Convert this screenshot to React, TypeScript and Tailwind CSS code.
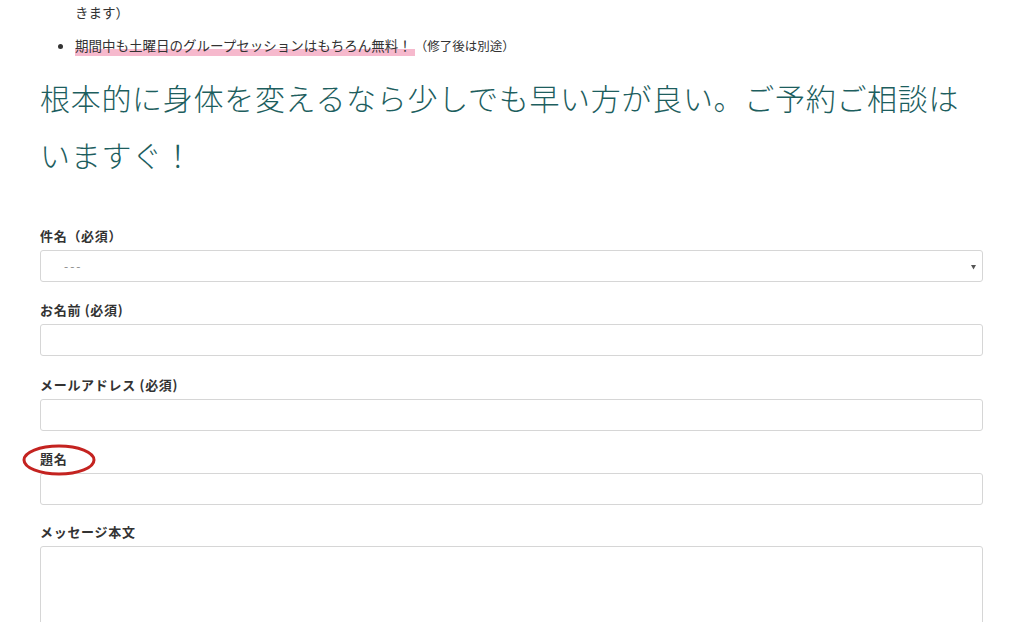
import React from "react";

const font = { fontFamily: '"Noto Sans CJK JP", "Noto Sans", sans-serif' };

function Label({ children }: { children: React.ReactNode }) {
  return (
    <div className="text-[13px] leading-[18px] font-bold text-[#333] tracking-[0.7px] mb-[5px]">{children}</div>
  );
}

export default function App() {
  return (
    <div className="w-[1024px] h-[622px] overflow-hidden bg-white text-[#333]" style={font}>
      <div className="pl-[40px] pr-[41px]">
        <ul className="pl-[35px] text-[13.5px] text-[#333]">
          <li className="list-none leading-[24px]">きます）</li>
          <li className="list-disc mt-[9px] leading-[24px]">
            <span className="bg-[linear-gradient(transparent_66%,#f6b9cd_66%)] pb-[1px] pr-[3px]">
              期間中も土曜日のグループセッションはもちろん無料！
            </span>
            <span className="text-[12.5px]">（修了後は別途）</span>
          </li>
        </ul>
        <h2 className="mt-[11px] text-[30px] leading-[57px] font-light text-[#1d5e5e] tracking-[0.7px]">
          根本的に身体を変えるなら少しでも早い方が良い。ご予約ご相談はいますぐ！
        </h2>

        <form className="mt-[44px]">
          <Label>件名（必須）</Label>
          <div className="relative h-[32px] border border-[#d6d6d6] rounded-[3px] flex items-center pl-[23px] text-[12px] tracking-[2px] text-[#888] mb-[19px]">
            ---
            <svg className="absolute right-[6px] top-[14px]" width="5" height="5" viewBox="0 0 5 5">
              <path d="M0 0 L5 0 L2.5 4.5 Z" fill="#555" />
            </svg>
          </div>

          <Label>お名前 (必須)</Label>
          <div className="h-[32px] border border-[#d6d6d6] rounded-[3px] mb-[20px]" />

          <Label>メールアドレス (必須)</Label>
          <div className="h-[32px] border border-[#d6d6d6] rounded-[3px] mb-[19px]" />

          <div className="relative">
            <Label>題名</Label>
            <svg
              className="absolute left-[-18px] top-[-6px]"
              width="74"
              height="32"
              viewBox="0 0 74 32"
            >
              <ellipse cx="37" cy="16" rx="35" ry="14" fill="none" stroke="#c42320" strokeWidth="3" />
            </svg>
          </div>
          <div className="h-[32px] border border-[#d6d6d6] rounded-[3px] mb-[18px]" />

          <Label>メッセージ本文</Label>
          <div className="h-[150px] border border-[#d6d6d6] rounded-[3px]" />
        </form>
      </div>
    </div>
  );
}
